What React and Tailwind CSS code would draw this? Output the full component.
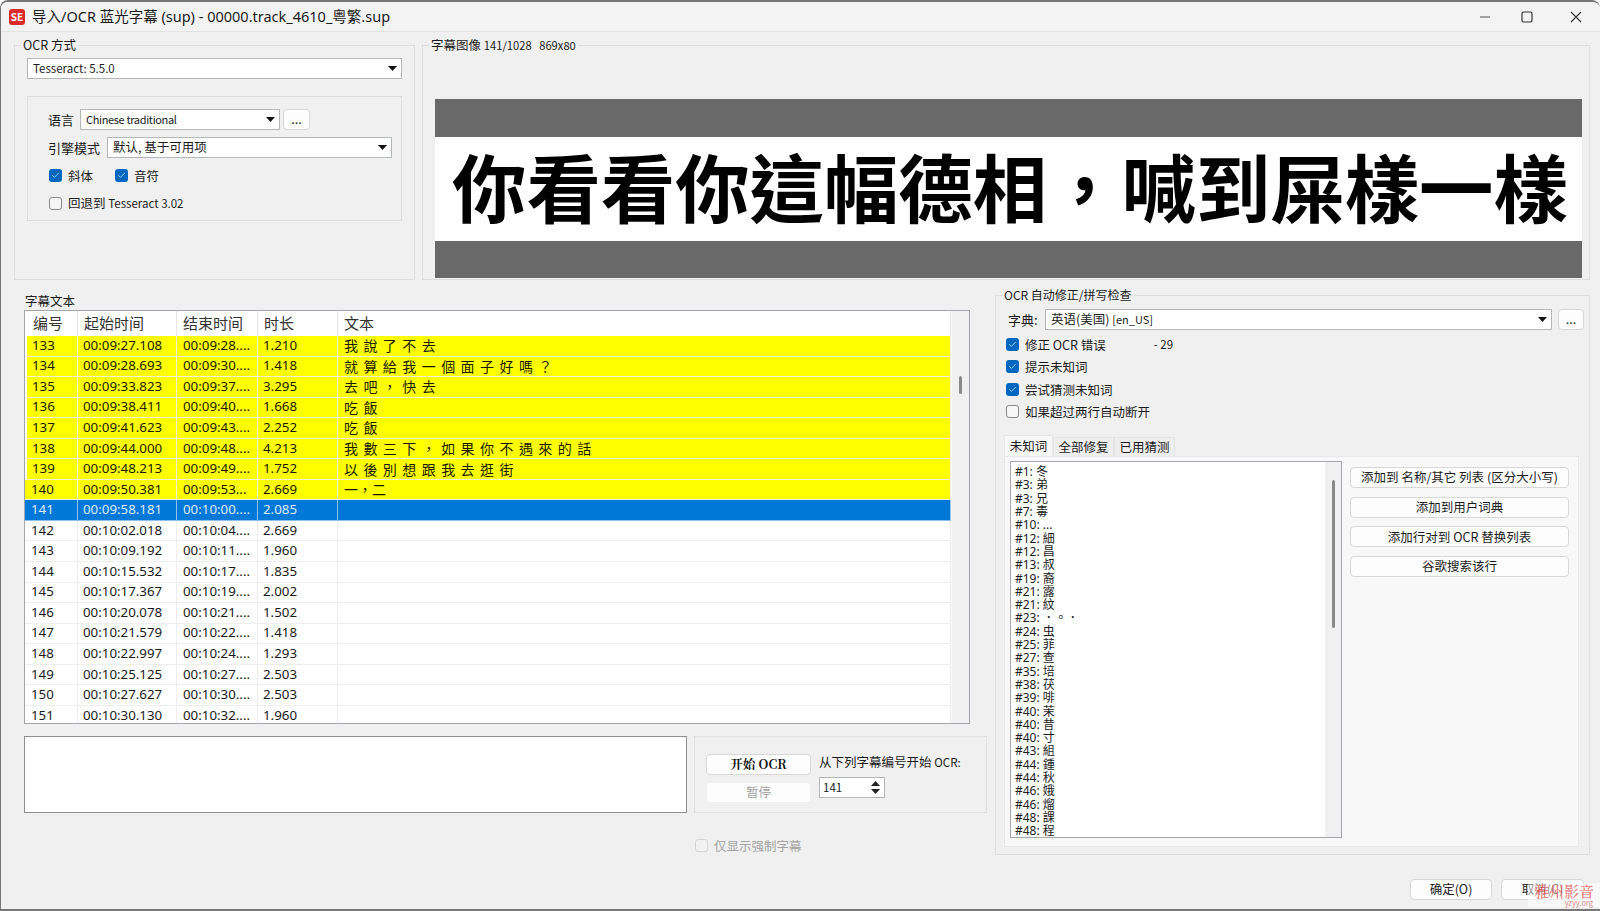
import React from "react";
import { Check } from "lucide-react";

const rows = [
  ["133", "00:09:27.108", "00:09:28....", "1.210", "我 說 了 不 去"],
  ["134", "00:09:28.693", "00:09:30....", "1.418", "就 算 給 我 一 個 面 子 好 嗎 ？"],
  ["135", "00:09:33.823", "00:09:37....", "3.295", "去 吧 ， 快 去"],
  ["136", "00:09:38.411", "00:09:40....", "1.668", "吃 飯"],
  ["137", "00:09:41.623", "00:09:43....", "2.252", "吃 飯"],
  ["138", "00:09:44.000", "00:09:48....", "4.213", "我 數 三 下 ， 如 果 你 不 遇 來 的 話"],
  ["139", "00:09:48.213", "00:09:49....", "1.752", "以 後 別 想 跟 我 去 逛 街"],
  ["140", "00:09:50.381", "00:09:53...", "2.669", "一，二"],
  ["141", "00:09:58.181", "00:10:00....", "2.085", ""],
  ["142", "00:10:02.018", "00:10:04....", "2.669", ""],
  ["143", "00:10:09.192", "00:10:11....", "1.960", ""],
  ["144", "00:10:15.532", "00:10:17....", "1.835", ""],
  ["145", "00:10:17.367", "00:10:19....", "2.002", ""],
  ["146", "00:10:20.078", "00:10:21....", "1.502", ""],
  ["147", "00:10:21.579", "00:10:22....", "1.418", ""],
  ["148", "00:10:22.997", "00:10:24....", "1.293", ""],
  ["149", "00:10:25.125", "00:10:27....", "2.503", ""],
  ["150", "00:10:27.627", "00:10:30....", "2.503", ""],
  ["151", "00:10:30.130", "00:10:32....", "1.960", ""],
];

const unknownWords = [
  "#1: 冬", "#3: 弟", "#3: 兄", "#7: 毒", "#10: ...", "#12: 細", "#12: 昌", "#13: 叔",
  "#19: 裔", "#21: 露", "#21: 紋", "#23: ．。．", "#24: 虫", "#25: 菲", "#27: 查", "#35: 培",
  "#38: 茯", "#39: 啡", "#40: 茉", "#40: 昔", "#40: 寸", "#43: 組", "#44: 鍾", "#44: 秋",
  "#46: 娥", "#46: 熘", "#48: 課", "#48: 程",
];

function GroupBox({ title, className = "", bodyClass = "", children }) {
  return (
    <fieldset className={`border border-[#dedede] min-w-0 ${className}`}>
      <legend className="ml-[6px] px-[2px] h-[18px] leading-[18px] text-[12.5px]">{title}</legend>
      <div className={bodyClass}>{children}</div>
    </fieldset>
  );
}

function Arrow() {
  return (
    <svg width="9" height="5" viewBox="0 0 9 5" className="shrink-0">
      <polygon points="0,0 9,0 4.5,5" fill="#111" />
    </svg>
  );
}

function Combo({ value, className = "" }) {
  return (
    <div className={`h-[21px] bg-white border border-[#b4b7ba] flex items-center justify-between pl-[5px] pr-[4px] text-[12.5px] ${className}`}>
      <span>{value}</span>
      <Arrow />
    </div>
  );
}

function Button({ children, className = "" }) {
  return (
    <div className={`h-[21px] bg-[#fdfdfd] border border-[#d8d8d8] rounded-[4px] flex items-center justify-center text-[12.5px] ${className}`}>
      {children}
    </div>
  );
}

function CheckBox({ checked, label, className = "", disabled }) {
  return (
    <div className={`flex items-center gap-[6px] ${disabled ? "text-[#a3a3a3]" : ""} ${className}`}>
      {checked ? (
        <span className="w-[13px] h-[13px] rounded-[3px] bg-[#0067c0] flex items-center justify-center">
          <Check size={9} color="#dbeafe" strokeWidth={2} />
        </span>
      ) : (
        <span className={`w-[13px] h-[13px] rounded-[3px] border ${disabled ? "border-[#d6d6d6] bg-[#f2f2f2]" : "border-[#8a8a8a] bg-[#f6f6f6]"}`} />
      )}
      <span className="text-[12.5px] leading-[13px] whitespace-nowrap">{label}</span>
    </div>
  );
}

function SubtitleRow({ row }) {
  const n = Number(row[0]);
  const yellow = n <= 140;
  const selected = n === 141;
  const tone = selected
    ? "bg-[#0078d7] text-[#dcebf8] border-[#8fc0ea]"
    : yellow
      ? "bg-[#ffff00] text-[#1a1a00] border-[#f0f0d8]"
      : "bg-white text-[#1a1a1a] border-[#eeeeee]";
  const cell = `border-r border-b flex items-center overflow-hidden whitespace-nowrap ${tone}`;
  return (
    <div className="grid grid-cols-[53px_99px_81px_80px_1fr] h-[20.55px] text-[13.3px] font-['Noto_Sans',sans-serif]">
      <div className={`${cell} ${yellow && n < 140 ? "ml-[2px] pl-[5px]" : "pl-[6px]"}`}>{row[0]}</div>
      <div className={`${cell} pl-[5px]`}>{row[1]}</div>
      <div className={`${cell} pl-[6px]`}>{row[2]}</div>
      <div className={`${cell} pl-[5px]`}>{row[3]}</div>
      <div className={`${cell} pl-[6px] text-[14px] [word-spacing:2.3px] font-['Noto_Sans_CJK_TC',sans-serif]`}>{row[4]}</div>
    </div>
  );
}

export default function App() {
  return (
    <div className="relative w-[1600px] h-[911px] bg-[#f0f0f0] text-[#1c1c1c] flex flex-col overflow-hidden rounded-t-[8px] border-t-2 border-b-2 border-l border-[#777777] font-['Noto_Sans_CJK_SC',sans-serif]">
      {/* Title bar */}
      <div className="h-[30px] shrink-0 bg-[#f3f3f3] border-b border-[#e2e2e2] flex items-center">
        <div className="ml-[8px] w-[16px] h-[16px] rounded-[3px] bg-[#d92b2b] text-white text-[10px] font-bold leading-none flex items-center justify-center">
          SE
        </div>
        <div className="ml-[7px] text-[14.5px] font-['Noto_Sans','Noto_Sans_CJK_SC',sans-serif]">导入/OCR 蓝光字幕 (sup) - 00000.track_4610_粤繁.sup</div>
        <div className="ml-auto flex items-center">
          <svg width="12" height="12" viewBox="0 0 12 12" className="mr-[30px]">
            <path d="M1 6h10" stroke="#555" strokeWidth="1.2" />
          </svg>
          <svg width="12" height="12" viewBox="0 0 12 12" className="mr-[37px]">
            <rect x="1" y="1" width="10" height="10" rx="1.5" fill="none" stroke="#333" strokeWidth="1.2" />
          </svg>
          <svg width="12" height="12" viewBox="0 0 12 12" className="mr-[18px]">
            <path d="M1 1l10 10M11 1L1 11" stroke="#333" strokeWidth="1.1" />
          </svg>
        </div>
      </div>

      {/* Top row */}
      <div className="flex gap-[7px] pl-[13px] pr-[10px] pt-[4px]">
        <GroupBox title="OCR 方式" className="w-[401px] h-[244px] shrink-0" bodyClass="px-[12px] pt-[4px]">
          <Combo value={<span className="text-[11.5px]">Tesseract: 5.5.0</span>} />
          <div className="mt-[17px] h-[125px] border border-[#dedede] pl-[21px] pt-[12px]">
            <div className="flex items-center -ml-[1px]">
              <span className="w-[32px] text-[13px]">语言</span>
              <Combo value={<span className="text-[11px] tracking-[-0.35px]">Chinese traditional</span>} className="w-[200px]" />
              <Button className="w-[27px] ml-[3px]">...</Button>
            </div>
            <div className="flex items-center mt-[7px] -ml-[1px]">
              <span className="w-[59px] text-[13px]">引擎模式</span>
              <Combo value="默认, 基于可用项" className="w-[285px]" />
            </div>
            <div className="flex mt-[11px] gap-[22px]">
              <CheckBox checked label="斜体" />
              <CheckBox checked label="音符" />
            </div>
            <CheckBox label={<>回退到 <span className="text-[11.5px]">Tesseract 3.02</span></>} className="mt-[14px]" />
          </div>
        </GroupBox>

        <GroupBox
          title={<>字幕图像 <span className="text-[11.2px]">141/1028&nbsp;&nbsp;&nbsp;869x80</span></>}
          className="flex-1 h-[244px]"
          bodyClass="pl-[12px] pr-[7px] pt-[45px]"
        >
          <div className="h-[38px] bg-[#696969]" />
          <div className="h-[104px] bg-white flex items-center pl-[17px] pb-[8px]">
            <span className="text-[74.4px] leading-none font-bold text-black whitespace-nowrap font-['Noto_Sans_CJK_TC',sans-serif]">
              你看看你這幅德相，喊到屎樣一樣
            </span>
          </div>
          <div className="h-[37px] bg-[#696969]" />
        </GroupBox>
      </div>

      {/* Lower row */}
      <div className="flex gap-[8px] pl-[23px] pr-[10px] mt-[6px]">
        <div className="w-[963px] shrink-0 pt-[6px]">
          <div className="h-[18px] leading-[18px] text-[12.5px] pl-[1px]">字幕文本</div>
          <div className="w-[946px] h-[414px] border border-[#a3a7ab] bg-white flex overflow-hidden">
            <div className="flex-1 min-w-0">
              <div className="grid grid-cols-[53px_99px_81px_80px_1fr] h-[25px] text-[15px] text-[#333]">
                {["编号", "起始时间", "结束时间", "时长", "文本"].map((h, i) => (
                  <div key={h} className={`flex items-center border-r border-[#e6e6e6] ${i === 0 ? "pl-[8px]" : "pl-[6px]"}`}>
                    {h}
                  </div>
                ))}
              </div>
              {rows.map((r) => (
                <SubtitleRow key={r[0]} row={r} />
              ))}
            </div>
            <div className="w-[18px] shrink-0 bg-[#f0f0f0] border-l border-[#f8f8f8] flex justify-center pt-[65px]">
              <div className="w-[3px] h-[18px] bg-[#8a8a8a] rounded-full" />
            </div>
          </div>

          <div className="flex mt-[12px] h-[77px]">
            <div className="w-[663px] border border-[#8f8f8f] bg-white" />
            <div className="ml-[7px] flex-1 border border-[#e0e0e0] flex pl-[11px] pt-[17px]">
              <div className="w-[105px]">
                <Button className="font-bold text-[#111] font-['Noto_Serif_CJK_SC','Noto_Sans_CJK_SC',serif]">开始 OCR</Button>
                <Button className="mt-[7px] bg-[#f5f5f5] border-[#f0f0f0] text-[#a3a3a3]">暂停</Button>
              </div>
              <div className="ml-[8px]">
                <div className="text-[12.5px] leading-[16px]">从下列字幕编号开始 <span className="text-[11.5px]">OCR:</span></div>
                <div className="mt-[7px] w-[66px] h-[21px] bg-white border border-[#b4b7ba] flex items-center justify-between pl-[3px] pr-[4px] text-[11.5px]">
                  141
                  <svg width="9" height="13" viewBox="0 0 9 13">
                    <polygon points="4.5,0 9,5 0,5" fill="#222" />
                    <polygon points="0,8 9,8 4.5,13" fill="#222" />
                  </svg>
                </div>
              </div>
            </div>
          </div>

          <CheckBox disabled label="仅显示强制字幕" className="mt-[26px] ml-[671px]" />
        </div>

        <GroupBox
          title={<span className="text-[12px]">OCR 自动修正/拼写检查</span>}
          className="flex-1 h-[569px]"
          bodyClass="pl-[8px] pt-[5px]"
        >
          <div className="flex items-center">
            <span className="w-[41px] pl-[4px] text-[13px]">字典:</span>
            <Combo value={<>英语(美国) <span className="text-[11px]">[en_US]</span></>} className="w-[507px]" />
            <Button className="w-[26px] ml-[6px]">...</Button>
          </div>
          <div className="mt-[3.5px] pl-[2px]">
            <div className="h-[22.3px] flex items-center">
              <CheckBox checked label="修正 OCR 错误" />
              <span className="ml-[48px] text-[11.5px]">- 29</span>
            </div>
            <div className="h-[22.3px] flex items-center"><CheckBox checked label="提示未知词" /></div>
            <div className="h-[22.3px] flex items-center"><CheckBox checked label="尝试猜测未知词" /></div>
            <div className="h-[22.3px] flex items-center"><CheckBox label="如果超过两行自动断开" /></div>
          </div>

          <div className="mt-[12.5px] flex items-end h-[21px] text-[12.5px]">
            <div className="w-[49px] h-[21px] bg-[#f8f8f8] border border-b-0 border-[#e8e8e8] flex items-center justify-center">未知词</div>
            <div className="w-[61px] h-[19px] bg-[#eeeeee] border border-b-0 border-[#e4e4e4] flex items-center justify-center">全部修复</div>
            <div className="w-[61px] h-[19px] bg-[#eeeeee] border border-b-0 border-[#e4e4e4] flex items-center justify-center">已用猜测</div>
          </div>
          <div className="w-[575px] h-[391px] bg-[#f8f8f8] border border-[#e8e8e8] flex pl-[5px] pt-[4px]">
            <div className="w-[332px] h-[377px] bg-white border border-[#a3a7ab] flex overflow-hidden">
              <div className="flex-1 pl-[4px] pt-[3px] text-[12px] leading-[13.3px]">
                {unknownWords.map((w, i) => (
                  <div key={i} className="whitespace-nowrap font-['Noto_Sans','Noto_Sans_CJK_TC',sans-serif]">{w}</div>
                ))}
              </div>
              <div className="w-[16px] shrink-0 bg-[#f0f0f0] flex justify-center pt-[18px]">
                <div className="w-[3px] h-[148px] bg-[#8a8a8a] rounded-full" />
              </div>
            </div>
            <div className="ml-[8px] w-[219px] pt-[6px] flex flex-col gap-[8.6px]">
              <Button>添加到 名称/其它 列表 (区分大小写)</Button>
              <Button>添加到用户词典</Button>
              <Button>添加行对到 OCR 替换列表</Button>
              <Button>谷歌搜索该行</Button>
            </div>
          </div>
        </GroupBox>
      </div>

      {/* Dialog buttons */}
      <div className="flex justify-end gap-[9px] pr-[16px] mt-[24px]">
        <Button className="w-[82px]">确定(O)</Button>
        <Button className="w-[83px]">取消(C)</Button>
      </div>

      {/* Watermark */}
      <div className="absolute right-0 bottom-[2px] w-[72px] h-[24px] bg-white/50 flex flex-col items-center justify-center leading-none">
        <span className="text-[15px] text-[#e2453f]/85 leading-[16px] font-['Noto_Serif_CJK_SC','Noto_Sans_CJK_SC',serif]">雅州影音</span>
        <span className="text-[7.5px] text-[#d98a86] leading-[8px] self-end pr-[7px]">yzyy.org</span>
      </div>
    </div>
  );
}
